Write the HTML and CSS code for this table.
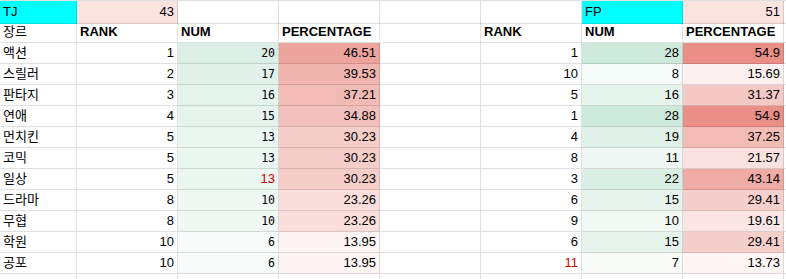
FILE: index.html
```html
<!DOCTYPE html>
<html lang="ko">
<head>
<meta charset="utf-8">
<title>Sheet</title>
<link rel="stylesheet" href="styles.css">
</head>
<body>
<div class="sheet">
  <!-- row 1 -->
  <div class="c first cyan">TJ</div>
  <div class="c first r pink">43</div>
  <div class="c first"></div>
  <div class="c first"></div>
  <div class="c first"></div>
  <div class="c first"></div>
  <div class="c first cyan">FP</div>
  <div class="c first r pink">51</div>
  <div class="c first"></div>
  <!-- row 2 -->
  <div class="c">장르</div>
  <div class="c hdr">RANK</div>
  <div class="c hdr">NUM</div>
  <div class="c hdr">PERCENTAGE</div>
  <div class="c"></div>
  <div class="c hdr">RANK</div>
  <div class="c hdr">NUM</div>
  <div class="c hdr">PERCENTAGE</div>
  <div class="c"></div>
  <!-- data rows -->
  <div class="c">액션</div><div class="c r">1</div><div class="c r mono" style="background:rgb(219,239,230)">20</div><div class="c r" style="background:rgb(237,164,157)">46.51</div><div class="c"></div><div class="c r">1</div><div class="c r" style="background:rgb(205,233,220)">28</div><div class="c r" style="background:rgb(233,143,135)">54.9</div><div class="c"></div>
  <div class="c">스릴러</div><div class="c r">2</div><div class="c r mono" style="background:rgb(226,242,235)">17</div><div class="c r" style="background:rgb(241,181,176)">39.53</div><div class="c"></div><div class="c r">10</div><div class="c r" style="background:rgb(245,251,248)">8</div><div class="c r" style="background:rgb(252,241,240)">15.69</div><div class="c"></div>
  <div class="c">판타지</div><div class="c r">3</div><div class="c r mono" style="background:rgb(228,243,236)">16</div><div class="c r" style="background:rgb(242,187,182)">37.21</div><div class="c"></div><div class="c r">5</div><div class="c r" style="background:rgb(229,244,237)">16</div><div class="c r" style="background:rgb(245,202,198)">31.37</div><div class="c"></div>
  <div class="c">연애</div><div class="c r">4</div><div class="c r mono" style="background:rgb(230,244,237)">15</div><div class="c r" style="background:rgb(243,193,189)">34.88</div><div class="c"></div><div class="c r">1</div><div class="c r" style="background:rgb(205,233,220)">28</div><div class="c r" style="background:rgb(233,143,135)">54.9</div><div class="c"></div>
  <div class="c">먼치킨</div><div class="c r">5</div><div class="c r mono" style="background:rgb(234,246,240)">13</div><div class="c r" style="background:rgb(245,205,201)">30.23</div><div class="c"></div><div class="c r">4</div><div class="c r" style="background:rgb(223,241,233)">19</div><div class="c r" style="background:rgb(242,187,182)">37.25</div><div class="c"></div>
  <div class="c">코믹</div><div class="c r">5</div><div class="c r mono" style="background:rgb(234,246,240)">13</div><div class="c r" style="background:rgb(245,205,201)">30.23</div><div class="c"></div><div class="c r">8</div><div class="c r" style="background:rgb(239,248,244)">11</div><div class="c r" style="background:rgb(249,226,224)">21.57</div><div class="c"></div>
  <div class="c">일상</div><div class="c r">5</div><div class="c r red" style="background:rgb(234,246,240)">13</div><div class="c r" style="background:rgb(245,205,201)">30.23</div><div class="c"></div><div class="c r">3</div><div class="c r" style="background:rgb(217,238,228)">22</div><div class="c r" style="background:rgb(239,172,166)">43.14</div><div class="c"></div>
  <div class="c">드라마</div><div class="c r">8</div><div class="c r mono" style="background:rgb(240,248,244)">10</div><div class="c r" style="background:rgb(249,222,220)">23.26</div><div class="c"></div><div class="c r">6</div><div class="c r" style="background:rgb(231,244,238)">15</div><div class="c r" style="background:rgb(245,207,203)">29.41</div><div class="c"></div>
  <div class="c">무협</div><div class="c r">8</div><div class="c r mono" style="background:rgb(240,248,244)">10</div><div class="c r" style="background:rgb(249,222,220)">23.26</div><div class="c"></div><div class="c r">9</div><div class="c r" style="background:rgb(241,249,245)">10</div><div class="c r" style="background:rgb(250,231,229)">19.61</div><div class="c"></div>
  <div class="c">학원</div><div class="c r">10</div><div class="c r mono" style="background:rgb(247,251,249)">6</div><div class="c r" style="background:rgb(253,245,244)">13.95</div><div class="c"></div><div class="c r">6</div><div class="c r" style="background:rgb(231,244,238)">15</div><div class="c r" style="background:rgb(245,207,203)">29.41</div><div class="c"></div>
  <div class="c">공포</div><div class="c r">10</div><div class="c r mono" style="background:rgb(247,251,249)">6</div><div class="c r" style="background:rgb(253,245,244)">13.95</div><div class="c"></div><div class="c r red">11</div><div class="c r" style="background:rgb(247,252,249)">7</div><div class="c r" style="background:rgb(253,246,245)">13.73</div><div class="c"></div>
  <!-- partial row -->
  <div class="c"></div><div class="c"></div><div class="c"></div><div class="c"></div><div class="c"></div><div class="c"></div><div class="c"></div><div class="c"></div><div class="c"></div>
</div>
</body>
</html>
```
FILE: styles.css
```css
html, body {
  margin: 0;
  padding: 0;
  background: #ffffff;
  overflow: hidden;
}

.sheet {
  display: grid;
  grid-template-columns: 77px repeat(7, 101px) 8px;
  grid-auto-rows: 21px;
  border-top: 1px solid rgba(0, 0, 0, 0.12);
  width: 786px;
  height: 279px;
  box-sizing: border-box;
  overflow: hidden;
  font-family: "Liberation Sans", "Noto Sans CJK KR", Arial, sans-serif;
  font-size: 13px;
  color: #000;
}

.c {
  box-sizing: border-box;
  border-right: 1px solid rgba(0, 0, 0, 0.12);
  border-bottom: 1px solid rgba(0, 0, 0, 0.12);
  padding: 0 3px;
  line-height: 20px;
  white-space: nowrap;
  overflow: hidden;
}

.first {
  height: 23px;
  line-height: 22px;
}

.r {
  text-align: right;
}

.hdr {
  font-weight: bold;
}

.cyan {
  background: #00ffff;
}

.pink {
  background: #fbe3e0;
}

.mono {
  font-family: "DejaVu Sans Mono", "Liberation Mono", monospace;
  font-size: 11.5px;
}

.red {
  color: #cc0000;
}
```
